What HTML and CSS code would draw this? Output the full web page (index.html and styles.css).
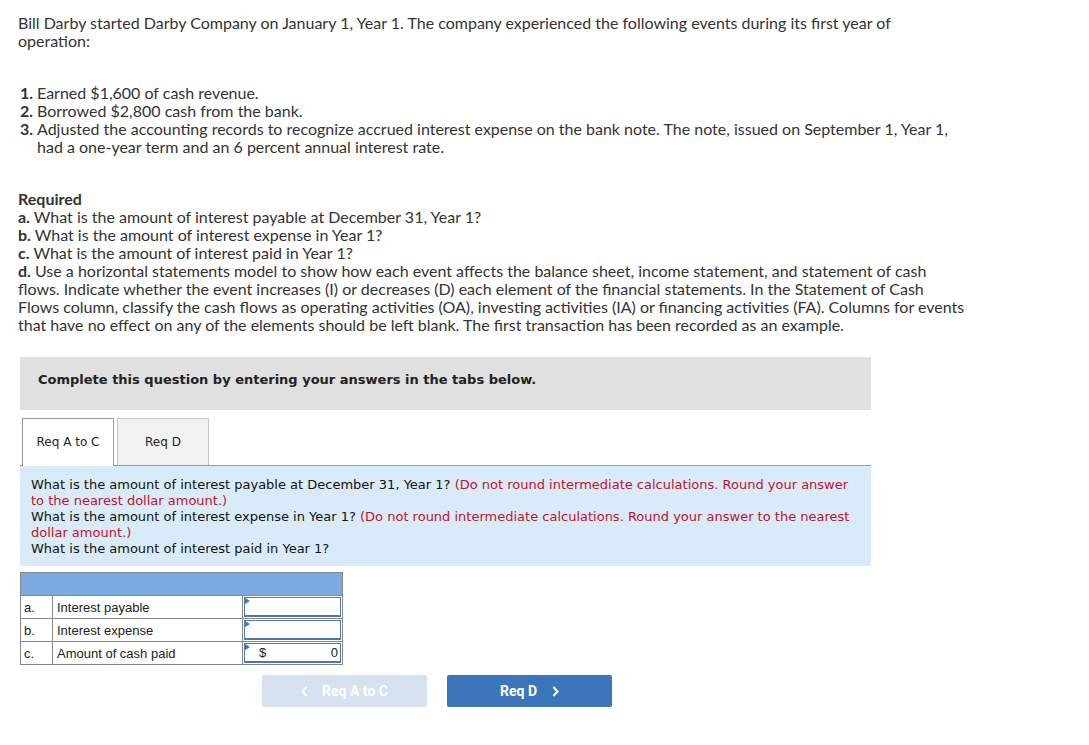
FILE: index.html
```html
<!DOCTYPE html>
<html>
<head>
<meta charset="utf-8">
<link rel="stylesheet" href="styles.css">
</head>
<body>
<div class="page">
  <div class="problem">
    <p class="intro">Bill Darby started Darby Company on January 1, Year 1. The company experienced the following events during its first year of operation:</p>
    <ol class="events">
      <li>Earned $1,600 of cash revenue.</li>
      <li>Borrowed $2,800 cash from the bank.</li>
      <li>Adjusted the accounting records to recognize accrued interest expense on the bank note. The note, issued on September 1, Year 1, had a one-year term and an 6 percent annual interest rate.</li>
    </ol>
    <div class="required">
      <div class="req-title">Required</div>
      <div><b>a.</b> What is the amount of interest payable at December 31, Year 1?</div>
      <div><b>b.</b> What is the amount of interest expense in Year 1?</div>
      <div><b>c.</b> What is the amount of interest paid in Year 1?</div>
      <div><b>d.</b> Use a horizontal statements model to show how each event affects the balance sheet, income statement, and statement of cash flows. Indicate whether the event increases (I) or decreases (D) each element of the financial statements. In the Statement of Cash Flows column, classify the cash flows as operating activities (OA), investing activities (IA) or financing activities (FA). Columns for events that have no effect on any of the elements should be left blank. The first transaction has been recorded as an example.</div>
    </div>
  </div>

  <div class="question">
    <div class="banner">Complete this question by entering your answers in the tabs below.</div>
    <div class="tabs">
      <div class="tab active">Req A to C</div>
      <div class="tab">Req D</div>
    </div>
    <div class="info">
      <div>What is the amount of interest payable at December 31, Year 1? <span class="hint">(Do not round intermediate calculations. Round your answer to the nearest dollar amount.)</span></div>
      <div>What is the amount of interest expense in Year 1? <span class="hint">(Do not round intermediate calculations. Round your answer to the nearest dollar amount.)</span></div>
      <div>What is the amount of interest paid in Year 1?</div>
    </div>

    <table class="answers">
      <tr class="head"><td colspan="3"></td></tr>
      <tr>
        <td class="key">a.</td>
        <td class="label">Interest payable</td>
        <td class="input"><div class="box"><span class="flag"></span></div></td>
      </tr>
      <tr>
        <td class="key">b.</td>
        <td class="label">Interest expense</td>
        <td class="input"><div class="box"><span class="flag"></span></div></td>
      </tr>
      <tr>
        <td class="key">c.</td>
        <td class="label">Amount of cash paid</td>
        <td class="input"><div class="box"><span class="flag"></span><span class="cur">$</span><span class="val">0</span></div></td>
      </tr>
    </table>

    <div class="nav">
      <div class="btn prev"><svg class="chev" width="7" height="11" viewBox="0 0 7 11"><polyline points="5.5,1 1.5,5.5 5.5,10" fill="none" stroke="#fff" stroke-width="2"/></svg>Req A to C</div>
      <div class="btn next">Req D<svg class="chev" width="7" height="11" viewBox="0 0 7 11"><polyline points="1.5,1 5.5,5.5 1.5,10" fill="none" stroke="#fff" stroke-width="2"/></svg></div>
    </div>
  </div>
</div>
</body>
</html>
```

FILE: styles.css
```css
body {
  margin: 8px;
  background: #fff;
  color: #333;
}
.page {
  padding: 0 10px;
}
.problem {
  width: 947px;
  font-family: Lato, "Open Sans", sans-serif;
  font-size: 16px;
  line-height: 18px;
  color: #333;
}
.intro {
  margin: 6px 0 0 0;
}
.events {
  margin: 34px 0 0 0;
  padding-left: 19px;
}
.events li::marker {
  font-weight: 700;
}
.required {
  margin-top: 34px;
}
.req-title {
  font-weight: 700;
}
.required b {
  font-weight: 700;
}

.question {
  margin-top: 23px;
  margin-left: 2px;
  width: 851px;
}
.banner {
  background: #e0e0e0;
  height: 53px;
  box-sizing: border-box;
  padding: 15px 0 0 18px;
  font-family: Verdana, "DejaVu Sans", sans-serif;
  font-size: 13px;
  font-weight: 700;
  color: #222;
}
.tabs {
  display: flex;
  gap: 3px;
  margin-top: 8px;
  padding-left: 2px;
  border-bottom: 1px solid #999;
  height: 47px;
}
.tab {
  width: 92px;
  box-sizing: border-box;
  border: 1px solid #c8c8c8;
  border-bottom: none;
  background: #f2f2f2;
  font-family: Verdana, "DejaVu Sans", sans-serif;
  font-size: 12px;
  color: #222;
  display: flex;
  justify-content: center;
  align-items: center;
  padding-bottom: 1px;
}
.tab.active {
  background: #fff;
  border-color: #999;
  height: 48px;
  position: relative;
  z-index: 1;
}
.info {
  background: #d9ebf9;
  padding: 11px 11px 8px 11px;
  font-family: Verdana, "DejaVu Sans", sans-serif;
  font-size: 13px;
  line-height: 16px;
  color: #111;
  height: 100px;
  box-sizing: border-box;
}
.hint {
  color: #c0142a;
}
.answers {
  margin-top: 6px;
  border-collapse: collapse;
  font-family: "Liberation Sans", Arial, sans-serif;
  font-size: 13px;
  color: #222;
}
.answers td {
  border: 1px solid #888;
  padding: 0;
  height: 22px;
}
.answers .head td {
  background: #7aace3;
  height: 22px;
}
.answers .key {
  width: 32px;
  padding-left: 3px;
  box-sizing: border-box;
}
.answers .label {
  width: 190px;
  padding-left: 4px;
  box-sizing: border-box;
}
.answers .input {
  width: 99px;
  padding: 0;
}
.box {
  position: relative;
  margin: 1px;
  height: 20px;
  border: 1px solid #4a78b0;
  border-bottom-width: 2px;
  box-sizing: border-box;
  display: flex;
  align-items: center;
  padding: 0 2px 0 14px;
  background: #fff;
}
.flag {
  position: absolute;
  left: 0;
  top: 0;
  width: 0;
  height: 0;
  border-top: 3px solid transparent;
  border-bottom: 3px solid transparent;
  border-left: 5px solid #3b73b9;
}
.cur {
  flex: 1;
}
.val {
  text-align: right;
}
.nav {
  display: flex;
  gap: 20px;
  margin-top: 10px;
  padding-left: 242px;
}
.btn {
  width: 165px;
  height: 32px;
  border-radius: 2px;
  display: flex;
  justify-content: center;
  align-items: center;
  font-family: Roboto, "Liberation Sans", sans-serif;
  font-weight: 700;
  font-size: 14px;
  color: #fff;
}
.btn.prev {
  background: #d7e2f0;
}
.btn.next {
  background: #3a76b9;
}
.prev .chev {
  margin-right: 14px;
}
.next .chev {
  margin-left: 15px;
}
```
